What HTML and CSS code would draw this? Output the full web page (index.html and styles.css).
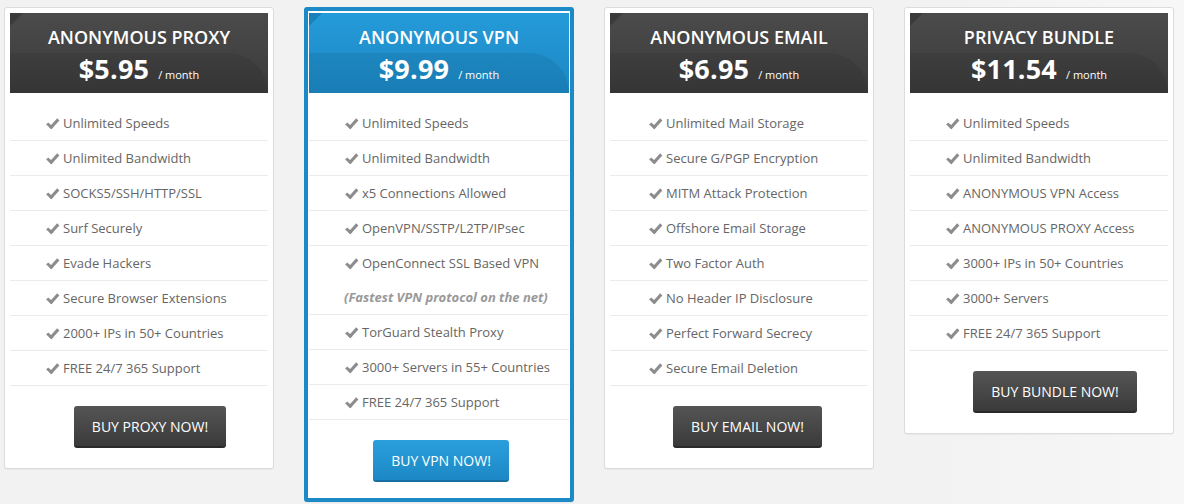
FILE: index.html
```html
<!DOCTYPE html>
<html>
<head>
<meta charset="utf-8">
<link rel="stylesheet" href="styles.css">
</head>
<body>
<div class="plans">
  <div class="card">
    <div class="head">
      <div class="title">ANONYMOUS PROXY</div>
      <div class="price"><span class="amt">$5.95</span><span class="per">/ month</span></div>
    </div>
    <ul class="feats">
      <li><span class="ck"></span>Unlimited Speeds</li>
      <li><span class="ck"></span>Unlimited Bandwidth</li>
      <li><span class="ck"></span>SOCKS5/SSH/HTTP/SSL</li>
      <li><span class="ck"></span>Surf Securely</li>
      <li><span class="ck"></span>Evade Hackers</li>
      <li><span class="ck"></span>Secure Browser Extensions</li>
      <li><span class="ck"></span>2000+ IPs in 50+ Countries</li>
      <li><span class="ck"></span>FREE 24/7 365 Support</li>
    </ul>
    <div class="foot"><a class="btn">BUY PROXY NOW!</a></div>
  </div>
  <div class="card featured">
    <div class="head">
      <div class="title">ANONYMOUS VPN</div>
      <div class="price"><span class="amt">$9.99</span><span class="per">/ month</span></div>
    </div>
    <ul class="feats">
      <li><span class="ck"></span>Unlimited Speeds</li>
      <li><span class="ck"></span>Unlimited Bandwidth</li>
      <li><span class="ck"></span>x5 Connections Allowed</li>
      <li><span class="ck"></span>OpenVPN/SSTP/L2TP/IPsec</li>
      <li class="nb"><span class="ck"></span>OpenConnect SSL Based VPN</li>
      <li class="note">(Fastest VPN protocol on the net)</li>
      <li><span class="ck"></span>TorGuard Stealth Proxy</li>
      <li><span class="ck"></span>3000+ Servers in 55+ Countries</li>
      <li><span class="ck"></span>FREE 24/7 365 Support</li>
    </ul>
    <div class="foot"><a class="btn">BUY VPN NOW!</a></div>
  </div>
  <div class="card">
    <div class="head">
      <div class="title">ANONYMOUS EMAIL</div>
      <div class="price"><span class="amt">$6.95</span><span class="per">/ month</span></div>
    </div>
    <ul class="feats">
      <li><span class="ck"></span>Unlimited Mail Storage</li>
      <li><span class="ck"></span>Secure G/PGP Encryption</li>
      <li><span class="ck"></span>MITM Attack Protection</li>
      <li><span class="ck"></span>Offshore Email Storage</li>
      <li><span class="ck"></span>Two Factor Auth</li>
      <li><span class="ck"></span>No Header IP Disclosure</li>
      <li><span class="ck"></span>Perfect Forward Secrecy</li>
      <li><span class="ck"></span>Secure Email Deletion</li>
    </ul>
    <div class="foot"><a class="btn">BUY EMAIL NOW!</a></div>
  </div>
  <div class="card">
    <div class="head">
      <div class="title">PRIVACY BUNDLE</div>
      <div class="price"><span class="amt">$11.54</span><span class="per">/ month</span></div>
    </div>
    <ul class="feats">
      <li><span class="ck"></span>Unlimited Speeds</li>
      <li><span class="ck"></span>Unlimited Bandwidth</li>
      <li><span class="ck"></span>ANONYMOUS VPN Access</li>
      <li><span class="ck"></span>ANONYMOUS PROXY Access</li>
      <li><span class="ck"></span>3000+ IPs in 50+ Countries</li>
      <li><span class="ck"></span>3000+ Servers</li>
      <li><span class="ck"></span>FREE 24/7 365 Support</li>
    </ul>
    <div class="foot"><a class="btn">BUY BUNDLE NOW!</a></div>
  </div>
</div>
</body>
</html>
```

FILE: styles.css
```css
html, body {
  margin: 0;
  padding: 0;
}
body {
  background: linear-gradient(90deg, #f2f2f2 0%, #f2f2f2 80%, #f7f7f7 100%);
  font-family: "Open Sans", "Liberation Sans", sans-serif;
  height: 504px;
  overflow: hidden;
}
.plans {
  display: flex;
  align-items: flex-start;
  gap: 30px;
  padding: 7px 4px 0;
}
.card {
  box-sizing: border-box;
  width: 270px;
  background: #fff;
  border: 1px solid #dcdcdc;
  border-radius: 3px;
  padding: 5px;
  box-shadow: 0 1px 1px rgba(0,0,0,0.04);
}
.card.featured {
  border: 4px solid #1c8ac7;
  padding: 2px 1px 1px;
}
.head {
  position: relative;
  overflow: hidden;
  height: 80px;
  background: linear-gradient(180deg, #4b4b4b 0%, #3a3a3a 100%);
  color: #fff;
  text-align: center;
}
.head::before {
  content: "";
  position: absolute;
  left: 0;
  top: 0;
  width: 0;
  height: 0;
  border-top: 13px solid #3a3a3a;
  border-right: 13px solid transparent;
}
.head::after {
  content: "";
  position: absolute;
  left: -10px;
  right: 0;
  top: 40px;
  bottom: -10px;
  border-top-right-radius: 40px;
  background: rgba(0,0,0,0.07);
}
.featured .head {
  background: linear-gradient(180deg, #259bd9 0%, #1c87c3 100%);
}
.featured .head::before {
  border-top-color: #1a80ba;
}
.title {
  position: relative;
  z-index: 1;
  font-size: 18px;
  font-weight: 600;
  line-height: 24px;
  padding-top: 12px;
}
.price {
  position: relative;
  z-index: 1;
  line-height: 34px;
  margin-top: 3px;
}
.amt {
  font-size: 27px;
  font-weight: 700;
  letter-spacing: 0.2px;
}
.per {
  font-size: 11px;
  margin-left: 9px;
}
.feats {
  list-style: none;
  margin: 13px 0 0;
  padding: 0;
}
.feats li {
  height: 34px;
  line-height: 34px;
  border-bottom: 1px solid #ebebeb;
  padding-left: 37px;
  font-size: 13px;
  color: #666;
  white-space: nowrap;
}
.card:nth-child(3) .feats li {
  padding-left: 40px;
}
.feats li.nb {
  border-bottom: none;
}
.feats li.note {
  font-style: italic;
  font-weight: 700;
  color: #999;
  padding-left: 35px;
  height: 34px;
  line-height: 34px;
}
.ck {
  display: inline-block;
  box-sizing: border-box;
  width: 12px;
  height: 7px;
  border-left: 3px solid #8c8c8c;
  border-bottom: 3px solid #8c8c8c;
  transform: rotate(-48deg) translateY(-3px);
  margin-left: 2px;
  margin-right: 2px;
  vertical-align: middle;
}
.foot {
  text-align: center;
  padding: 20px 0 15px;
}
.btn {
  display: inline-block;
  height: 42px;
  line-height: 41px;
  padding: 0 18px;
  box-sizing: border-box;
  border-radius: 3px;
  background: linear-gradient(180deg, #555 0%, #3a3a3a 100%);
  border-bottom: 2px solid #2a2a2a;
  color: #fff;
  font-size: 14px;
  text-decoration: none;
}
.card:nth-child(1) .btn { margin-left: 22px; }
.card:nth-child(2) .btn { margin-left: 4px; }
.card:nth-child(3) .btn { margin-left: 17px; }
.card:nth-child(4) .btn { margin-left: 32px; }
.featured .btn {
  background: linear-gradient(180deg, #2a9fdc 0%, #1c88c5 100%);
  border-bottom-color: #17709f;
}
```
